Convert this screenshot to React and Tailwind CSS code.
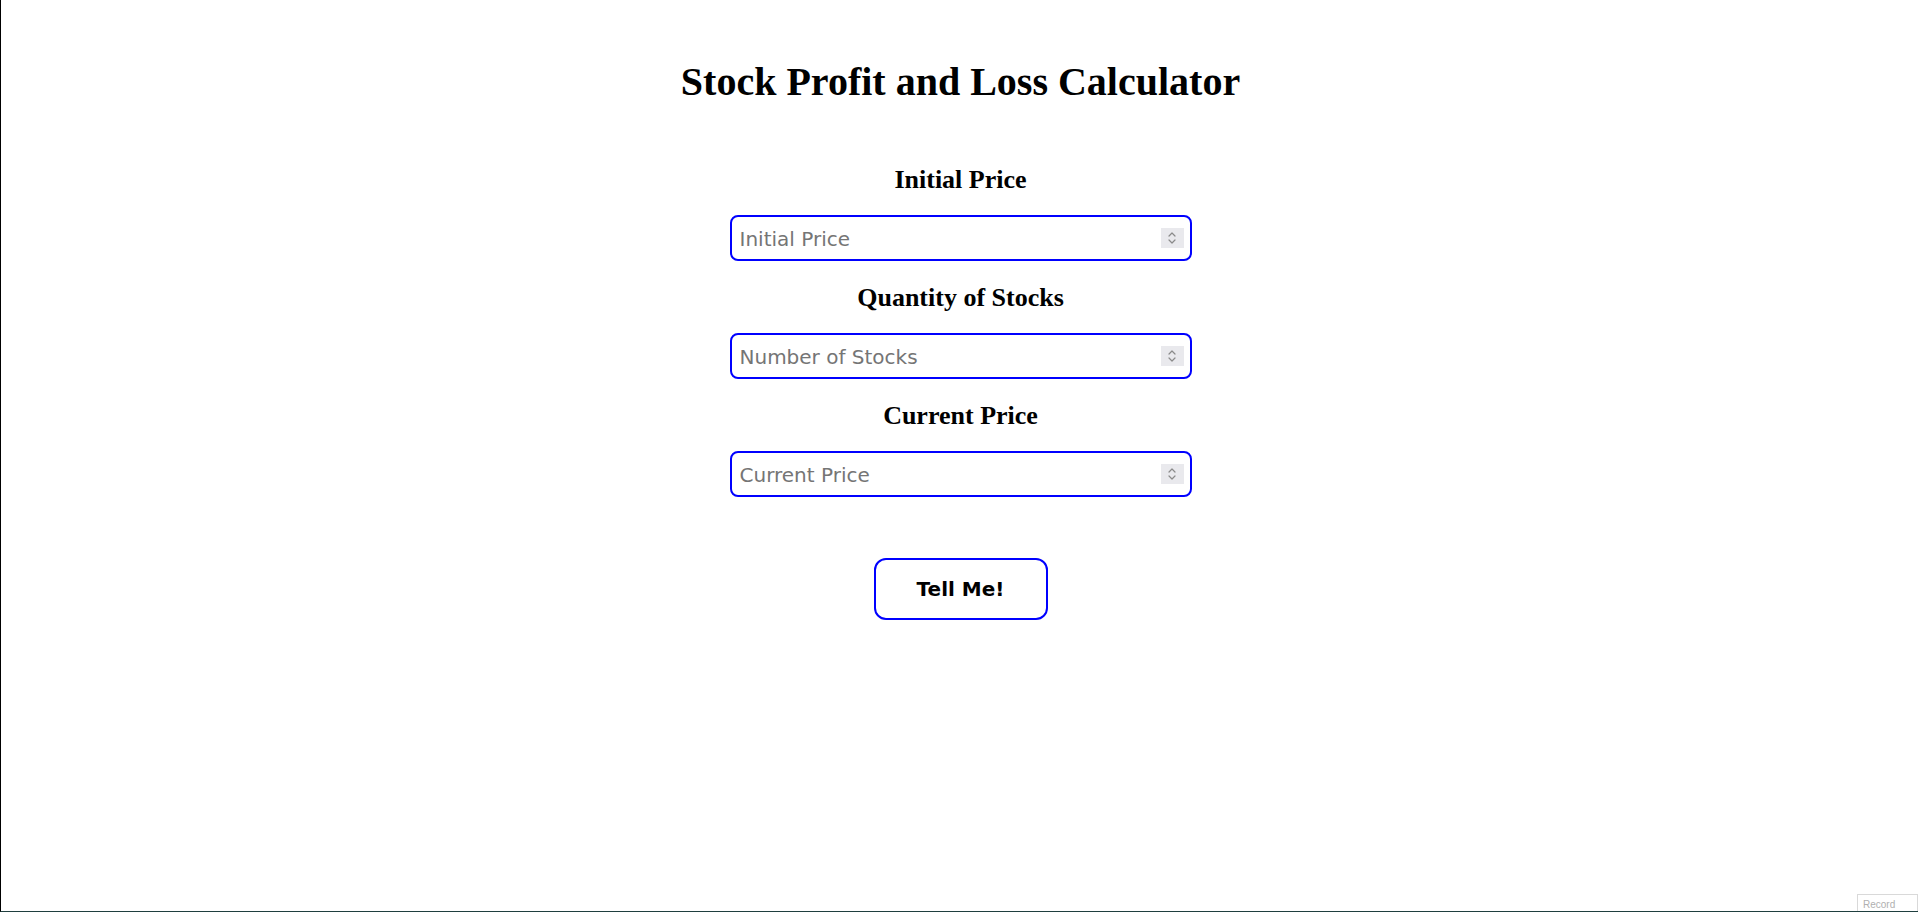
import React from "react";

function Spinner() {
  return (
    <div className="pointer-events-none absolute right-[8px] top-1/2 flex h-[20px] w-[23px] -translate-y-1/2 items-center justify-center bg-[#e9e9ed]">
      <svg width="10" height="14" viewBox="0 0 10 14" fill="none" stroke="#8a8a8a" strokeWidth="1.2" strokeLinecap="round" strokeLinejoin="round">
        <path d="M2 5 L5 2 L8 5" />
        <path d="M2 9 L5 12 L8 9" />
      </svg>
    </div>
  );
}

function Field({ label, placeholder, first }) {
  return (
    <>
      <label
        className={`block text-center font-['Liberation_Serif','Times_New_Roman',serif] text-[26px] leading-[28px] font-bold text-black ${first ? "mt-[62px]" : "mt-[23px]"}`}
      >
        {label}
      </label>
      <div className="relative mt-[21px] h-[46px] w-[462px]">
        <input
          type="text"
          placeholder={placeholder}
          className="h-full w-full rounded-[8px] border-2 border-[#0000ff] bg-white pt-[2px] pr-[40px] pl-[8px] font-['DejaVu_Sans',Verdana,sans-serif] text-[20px] text-black outline-none placeholder:text-[#757575]"
        />
        <Spinner />
      </div>
    </>
  );
}

export default function App() {
  return (
    <div className="relative h-[912px] w-full overflow-hidden border-b border-l border-b-[#1f3f3f] border-l-black bg-white">
      <div className="flex flex-col items-center pl-[2px]">
        <h1 className="mt-[60px] font-['Liberation_Serif','Times_New_Roman',serif] text-[40px] leading-[44px] font-bold text-black">
          Stock Profit and Loss Calculator
        </h1>
        <Field label="Initial Price" placeholder="Initial Price" first />
        <Field label="Quantity of Stocks" placeholder="Number of Stocks" />
        <Field label="Current Price" placeholder="Current Price" />
        <button className="mt-[61px] h-[62px] w-[174px] rounded-[12px] border-2 border-[#0000ff] bg-white font-['DejaVu_Sans',Verdana,sans-serif] text-[20px] font-bold text-black">
          Tell Me!
        </button>
      </div>
      <div className="absolute right-0 bottom-0 h-[17px] w-[61px] overflow-hidden border border-b-0 border-[#d9d9d9] bg-white pt-[4px] pl-[5px] font-['Liberation_Sans',Arial,sans-serif] text-[10px] leading-[11px] text-[#b0b0b0]">
        Record
      </div>
    </div>
  );
}
